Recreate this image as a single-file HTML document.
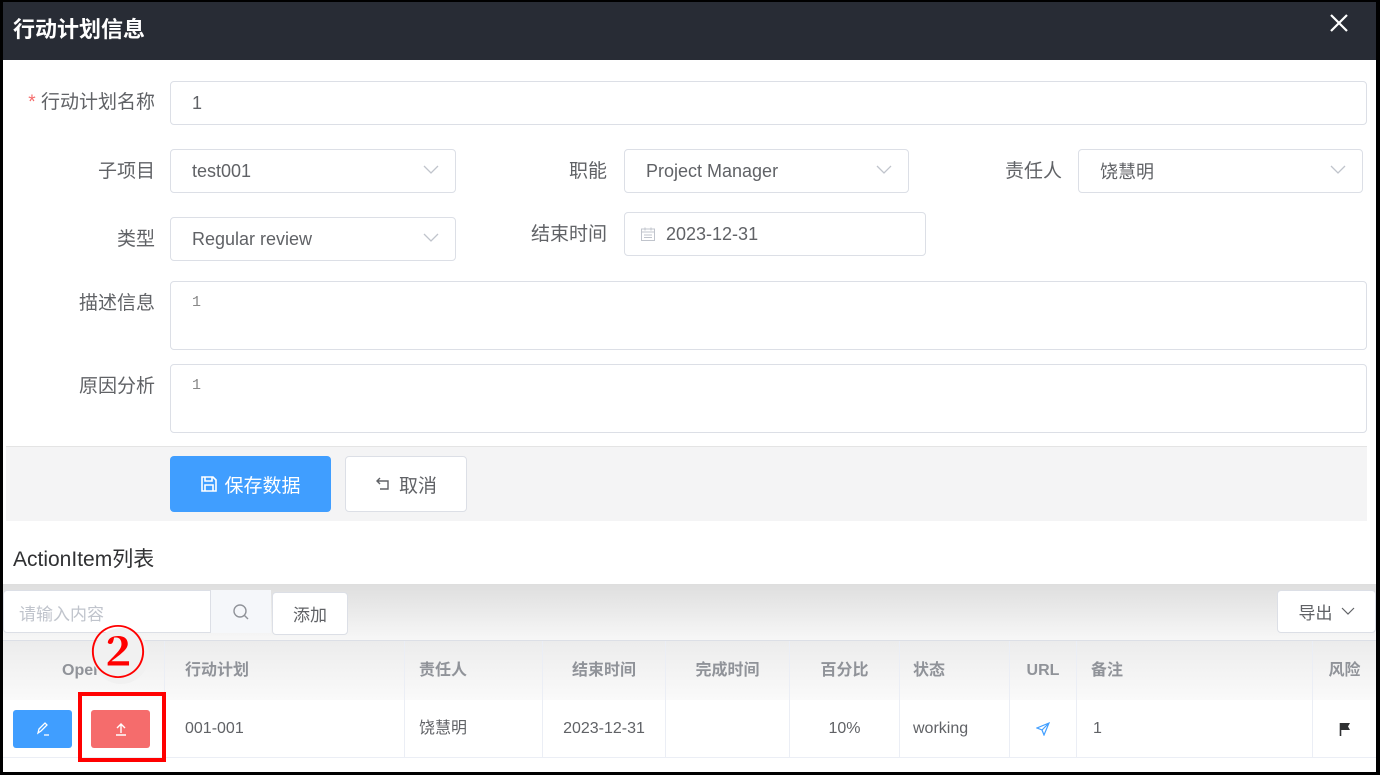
<!DOCTYPE html>
<html><head><meta charset="utf-8"><style>
*{box-sizing:border-box;margin:0;padding:0}
body{width:1380px;height:775px;overflow:hidden;background:#000;font-family:"Liberation Sans","Noto Sans CJK SC",sans-serif;position:relative}
.a{position:absolute}
#main{left:3px;top:2px;width:1373px;height:770px;background:#fff;overflow:hidden}
.hd{left:0;top:0;width:1373px;height:58px;background:#282c35}
.lbl{font-size:19px;color:#606266;text-align:right;white-space:nowrap;line-height:24px}
.inp{border:1px solid #dcdfe6;border-radius:4px;background:#fff;font-size:18px;color:#606266;padding-left:21px;display:flex;align-items:center}
.chev{position:absolute;right:16px;top:15px}
.th,.td{position:absolute;font-size:16px;display:flex;align-items:center;border-right:1px solid #ebeef5;line-height:20px}
.th{top:639px;height:59px;color:#909399;font-weight:bold;background:linear-gradient(#ececec,#fafafa)}
.td{top:698px;height:58px;color:#606266;border-bottom:1px solid #ebeef5}
</style></head><body>
<div id="main" class="a">
<div class="a hd"></div>
<div class="a" style="left:10px;top:10px;color:#fff;font-size:22px;font-weight:bold">行动计划信息</div>
<svg class="a" style="left:1326px;top:11px" width="20" height="20" viewBox="0 0 20 20"><path d="M2 2L18 18M18 2L2 18" stroke="#fff" stroke-width="2.2"/></svg>

<div class="a lbl" style="left:0;width:152px;top:89px"><span style="color:#f56c6c">* </span>行动计划名称</div>
<div class="a inp" style="left:167px;top:79px;width:1197px;height:44px">1</div>

<div class="a lbl" style="left:0;width:152px;top:158px">子项目</div>
<div class="a inp" style="left:167px;top:147px;width:286px;height:44px">test001<svg class="chev" width="16" height="10"><path d="M1 1L8 8L15 1" stroke="#c0c4cc" fill="none" stroke-width="1.3"/></svg></div>
<div class="a lbl" style="left:450px;width:154px;top:158px">职能</div>
<div class="a inp" style="left:621px;top:147px;width:285px;height:44px">Project Manager<svg class="chev" width="16" height="10"><path d="M1 1L8 8L15 1" stroke="#c0c4cc" fill="none" stroke-width="1.3"/></svg></div>
<div class="a lbl" style="left:900px;width:159px;top:158px">责任人</div>
<div class="a inp" style="left:1075px;top:147px;width:285px;height:44px">饶慧明<svg class="chev" width="16" height="10"><path d="M1 1L8 8L15 1" stroke="#c0c4cc" fill="none" stroke-width="1.3"/></svg></div>

<div class="a lbl" style="left:0;width:152px;top:226px">类型</div>
<div class="a inp" style="left:167px;top:215px;width:286px;height:44px">Regular review<svg class="chev" width="16" height="10"><path d="M1 1L8 8L15 1" stroke="#c0c4cc" fill="none" stroke-width="1.3"/></svg></div>
<div class="a lbl" style="left:450px;width:154px;top:221px">结束时间</div>
<div class="a inp" style="left:621px;top:210px;width:302px;height:44px;padding-left:15px"><svg width="16" height="16" viewBox="0 0 16 16" style="margin-right:10px"><rect x="1.5" y="3" width="13" height="11.5" fill="none" stroke="#c0c4cc"/><path d="M1.5 6h13M5 1.5v3M11 1.5v3M4 9h8M4 11.5h8" stroke="#c0c4cc"/></svg>2023-12-31</div>

<div class="a lbl" style="left:0;width:152px;top:290px">描述信息</div>
<div class="a inp" style="left:167px;top:279px;width:1197px;height:69px;align-items:flex-start;padding-top:12px;font-family:'Liberation Mono',monospace;font-size:15px;padding-left:21px;color:#888">1</div>
<div class="a lbl" style="left:0;width:152px;top:373px">原因分析</div>
<div class="a inp" style="left:167px;top:362px;width:1197px;height:69px;align-items:flex-start;padding-top:12px;font-family:'Liberation Mono',monospace;font-size:15px;padding-left:21px;color:#888">1</div>

<div class="a" style="left:3px;top:444px;width:1361px;height:75px;background:#f4f4f5;border-top:1px solid #e4e4e4"></div>
<div class="a" style="left:167px;top:454px;width:161px;height:56px;background:#409eff;border-radius:4px;color:#fff;font-size:19px;display:flex;align-items:center;justify-content:center"><svg width="18" height="18" viewBox="0 0 18 18" style="margin-right:6px"><path d="M2 2h11l3 3v11H2z M5 2v4h7V2 M5 16v-6h8v6" fill="none" stroke="#fff" stroke-width="1.6"/></svg>保存数据</div>
<div class="a" style="left:342px;top:454px;width:122px;height:56px;background:#fff;border:1px solid #dcdfe6;border-radius:4px;color:#606266;font-size:19px;display:flex;align-items:center;justify-content:center"><svg width="18" height="16" viewBox="0 0 18 16" style="margin-right:6px"><path d="M5 2L2 5L5 8M2 5h11v8H5" fill="none" stroke="#606266" stroke-width="1.4"/></svg>取消</div>

<div class="a" style="left:10px;top:541px;font-size:21px;color:#303133">ActionItem列表</div>

<div class="a" style="left:0;top:582px;width:1373px;height:57px;background:linear-gradient(#dedede,#f7f7f7);border-bottom:1px solid #dcdfe6"></div>
<div class="a" style="left:0;top:588px;width:268px;height:43px;background:#fff;border:1px solid #dcdfe6;border-radius:4px"></div>
<div class="a" style="left:16px;top:598px;font-size:17px;color:#c0c4cc">请输入内容</div>
<div class="a" style="left:207px;top:588px;width:61px;height:43px;background:#f5f7fa;border-left:1px solid #dcdfe6;display:flex;align-items:center;justify-content:center"><svg width="18" height="18"><circle cx="8" cy="8" r="6" fill="none" stroke="#909399" stroke-width="1.4"/><path d="M12.5 12.5L16 16" stroke="#909399" stroke-width="1.4"/></svg></div>
<div class="a" style="left:269px;top:590px;width:76px;height:43px;background:#fff;border:1px solid #dcdfe6;border-radius:4px;font-size:17px;color:#606266;display:flex;align-items:center;justify-content:center">添加</div>
<div class="a" style="left:1274px;top:588px;width:99px;height:43px;background:#fff;border:1px solid #dcdfe6;border-radius:4px;font-size:17px;color:#606266;display:flex;align-items:center;justify-content:center">导出<svg width="14" height="9" style="margin-left:8px"><path d="M1 1L7 7L13 1" stroke="#606266" fill="none" stroke-width="1.2"/></svg></div>

<div class="th" style="left:0;width:162px;padding-left:59px">Operation</div>
<div class="th" style="left:162px;width:240px;padding-left:20px">行动计划</div>
<div class="th" style="left:402px;width:138px;padding-left:14px">责任人</div>
<div class="th" style="left:540px;width:123px;justify-content:center">结束时间</div>
<div class="th" style="left:663px;width:124px;justify-content:center">完成时间</div>
<div class="th" style="left:787px;width:110px;justify-content:center">百分比</div>
<div class="th" style="left:897px;width:110px;padding-left:13px">状态</div>
<div class="th" style="left:1007px;width:67px;justify-content:center">URL</div>
<div class="th" style="left:1074px;width:236px;padding-left:14px">备注</div>
<div class="th" style="left:1310px;width:63px;justify-content:center;border-right:none">风险</div>

<div class="td" style="left:0;width:162px"></div>
<div class="td" style="left:162px;width:240px;padding-left:20px">001-001</div>
<div class="td" style="left:402px;width:138px;padding-left:14px">饶慧明</div>
<div class="td" style="left:540px;width:123px;justify-content:center">2023-12-31</div>
<div class="td" style="left:663px;width:124px"></div>
<div class="td" style="left:787px;width:110px;justify-content:center">10%</div>
<div class="td" style="left:897px;width:110px;padding-left:13px">working</div>
<div class="td" style="left:1007px;width:67px;justify-content:center"><svg width="14" height="14" viewBox="0 0 14 14"><path d="M13 1L1 6L6 8L8 13Z M6 8L13 1" fill="none" stroke="#409eff" stroke-width="1.2"/></svg></div>
<div class="td" style="left:1074px;width:236px;padding-left:16px">1</div>
<div class="td" style="left:1310px;width:63px;justify-content:center;border-right:none"><svg width="12" height="14" viewBox="0 0 12 14"><path d="M1.5 1v13" stroke="#303133" stroke-width="1.6"/><path d="M2 1h9l-2 3.5l2 3.5H2z" fill="#303133"/></svg></div>

<div class="a" style="left:10px;top:708px;width:59px;height:38px;background:#409eff;border-radius:3px;display:flex;align-items:center;justify-content:center"><svg width="16" height="16" viewBox="0 0 16 16"><path d="M3 12L4 8L10 2L12 4L6 10Z" fill="none" stroke="#fff" stroke-width="1.3"/><path d="M9 14h5" stroke="#fff" stroke-width="1.3"/></svg></div>
<div class="a" style="left:88px;top:708px;width:59px;height:38px;background:#f56c6c;border-radius:3px;display:flex;align-items:center;justify-content:center"><svg width="14" height="14" viewBox="0 0 14 14"><path d="M7 11V2M3 6L7 2L11 6M2 13h10" fill="none" stroke="#fff" stroke-width="1.4"/></svg></div>
<div class="a" style="left:75px;top:690px;width:88px;height:70px;border:4px solid #ff0000"></div>
<div class="a" style="left:90px;top:626px;width:56px;height:56px;border-radius:50%;background:#f1f1f1"></div>
<div class="a" style="left:87px;top:620px;font-family:'Liberation Serif','Noto Serif CJK SC',serif;font-size:56px;font-weight:bold;color:#ff0000;line-height:66px">②</div>
</div>
</body></html>
